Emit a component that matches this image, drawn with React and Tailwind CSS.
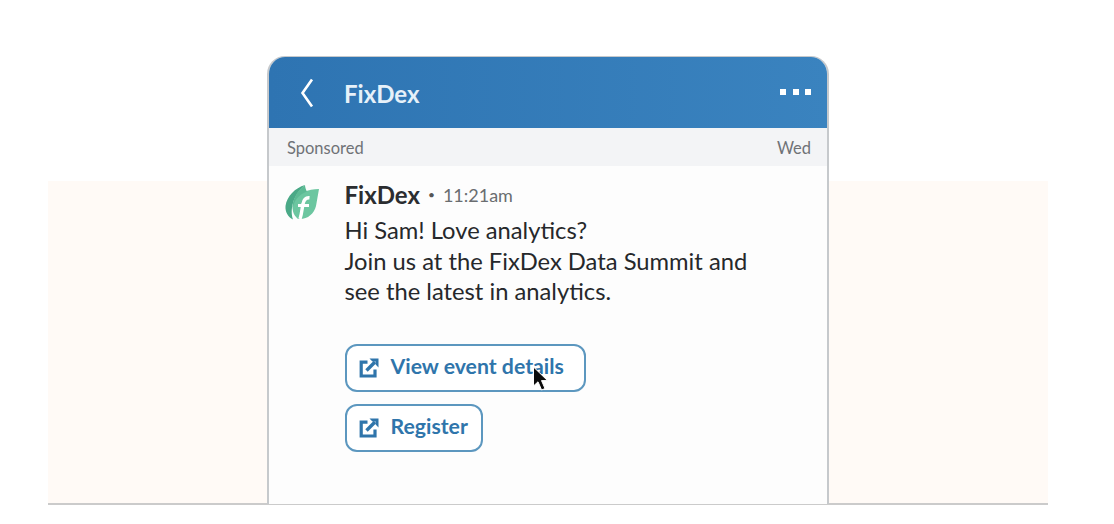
import React from "react";

const ExternalIcon = () => (
  <svg width="20" height="20" viewBox="0 0 20 20" fill="none" className="shrink-0">
    <path d="M8.5 4.2H2.2V18H16V11.5" stroke="#2f75ab" strokeWidth="3.2" />
    <path d="M7.5 12.5L16 4" stroke="#2f75ab" strokeWidth="3.4" />
    <path d="M10.5 0.5H19.5V9.5L16.6 6.6V3.4H13.4Z" fill="#2f75ab" />
  </svg>
);

const LeafLogo = () => (
  <svg width="36" height="36" viewBox="0 0 36 36" className="shrink-0">
    <path d="M35 5C24 5 14 9 10 17C7 24 9 31 14 35C23 36 30 30 32 22C33 16 34 11 35 5Z" fill="#6cc6a0" />
    <path d="M21 1C11 4 3 12 1.5 22C1 28 4 33 9 35.5C6 27 8 12 21 1Z" fill="#4aa987" />
    <path d="M21 1C13 7 8.5 14 8.5 25C10 17 14 11 23 7.5C22 6 21 3 21 1Z" fill="#5cba94" />
    <path d="M16 35C18 29 18 24 19 20C19.8 15.5 22 13.5 25.5 13.8" stroke="#fff" strokeWidth="3.4" fill="none" />
    <path d="M14 21.5H25" stroke="#fff" strokeWidth="3" />
  </svg>
);

const Cursor = () => (
  <svg width="18" height="26" viewBox="0 0 18 26" className="absolute left-[185px] top-[20px]">
    <path d="M1.5 1V20L6 15.8L9.6 24L13 22.5L9.5 14.6H15.5Z" fill="#0b0b0b" stroke="#fff" strokeWidth="1" />
  </svg>
);

const App = () => {
  return (
    <div className="w-[1114px] h-[524px] overflow-hidden bg-white pl-12 pt-[56px] font-['Lato',sans-serif]">
      <div className="grid w-[1000px] h-[449px]">
        <div className="col-start-1 row-start-1 mt-[125px] bg-[#fffaf6] border-b-2 border-[#cbcbcb]" />

        <div className="col-start-1 row-start-1 ml-[219px] w-[562px] mb-[1px] flex flex-col rounded-t-[18px] border-x-2 border-t border-[#c6c9cc] bg-[#fdfdfd] overflow-hidden">
          <div className="h-[71px] flex items-center justify-between pl-[29px] pr-[16px] bg-gradient-to-r from-[#2e74b2] to-[#3a83bf] text-white">
            <div className="flex items-center">
              <svg width="18" height="32" viewBox="0 0 18 32" fill="none">
                <path d="M14 2.5L4.5 16L14 29.5" stroke="#fff" strokeWidth="2.6" />
              </svg>
              <span className="ml-[28px] text-[24px] font-bold text-[#e6f1f9] translate-y-[1px]">FixDex</span>
            </div>
            <div className="flex gap-[6.5px] -translate-y-[1px]">
              <div className="w-[6px] h-[6px] bg-white" />
              <div className="w-[6px] h-[6px] bg-white" />
              <div className="w-[6px] h-[6px] bg-white" />
            </div>
          </div>

          <div className="h-[38px] flex items-center justify-between pl-[18px] pr-[16px] pt-[2px] bg-[#f3f4f6] text-[16.5px] text-[#6f7276]">
            <span>Sponsored</span>
            <span>Wed</span>
          </div>

          <div className="flex pl-[15px] pt-[18px]">
            <LeafLogo />
            <div className="ml-[24.5px] flex flex-col">
              <div className="flex items-center h-[24px] mb-[8px] -mt-[1px]">
                <span className="text-[24px] font-bold text-[#2b2d30]">FixDex</span>
                <span className="ml-[8px] text-[12px] text-[#555]">•</span>
                <span className="ml-[8px] text-[18px] text-[#6a6d70]">11:21am</span>
              </div>
              <p className="text-[23.75px] leading-[30.5px] text-[#26282b]">
                Hi Sam! Love analytics?
                <br />
                Join us at the FixDex Data Summit and
                <br />
                see the latest in analytics.
              </p>

              <div className="flex flex-col items-start gap-3 mt-[37px]">
                <div className="relative h-[48px] flex items-center gap-[12px] pl-[12px] pr-[20px] rounded-[12px] border-2 border-[#5c97bf] bg-white text-[21.25px] font-bold text-[#2f75ab]">
                  <ExternalIcon />
                  <span className="-translate-y-[1px]">View event details</span>
                  <Cursor />
                </div>
                <div className="h-[48px] flex items-center gap-[12px] pl-[12px] pr-[13px] rounded-[12px] border-2 border-[#5c97bf] bg-white text-[21.25px] font-bold text-[#2f75ab]">
                  <ExternalIcon />
                  <span className="-translate-y-[1px]">Register</span>
                </div>
              </div>
            </div>
          </div>
        </div>
      </div>
    </div>
  );
};

export default App;
